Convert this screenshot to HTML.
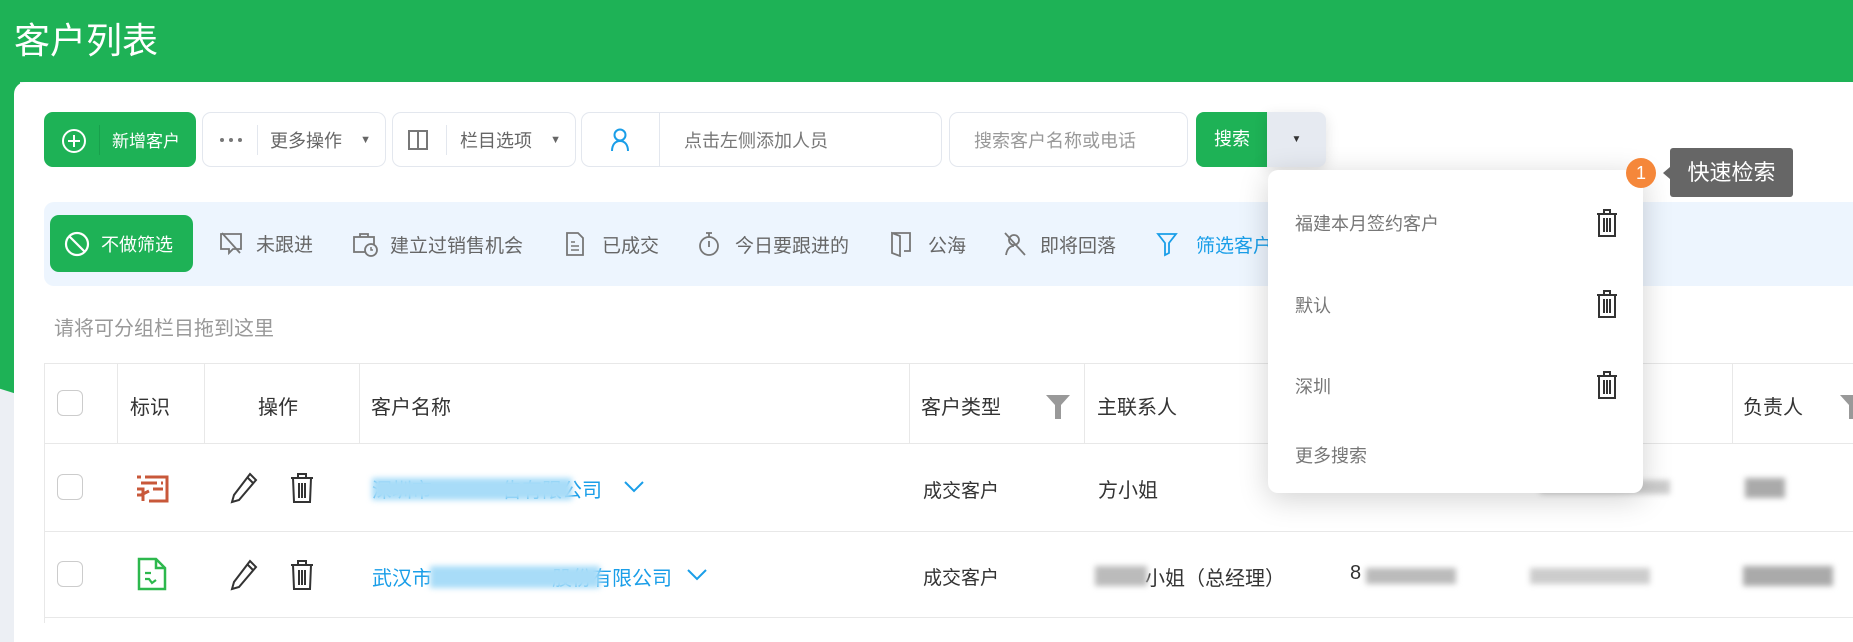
<!DOCTYPE html>
<html><head><meta charset="utf-8">
<style>
*{box-sizing:border-box;margin:0;padding:0}
body{width:1853px;height:622px;overflow:hidden;background:#eceff4;font-family:"Liberation Sans","Noto Sans CJK SC",sans-serif;position:relative;color:#333}
.abs{position:absolute}
.green{background:#1eb256}
.card{position:absolute;left:14px;top:82px;width:1860px;height:560px;background:#fff;border-radius:12px 0 0 0}
.btn{position:absolute;border:1px solid #e3e7ee;border-radius:9px;background:#fff;height:55px;top:112px;display:flex;align-items:center;font-size:18px;color:#666}
.fi{position:absolute;top:231px;font-size:19px;color:#666;display:flex;align-items:center}
.th,.td{position:absolute;font-size:20px;color:#333}
.vl{position:absolute;top:363px;height:80px;width:1px;background:#e8e8e8}
.hl{position:absolute;left:44px;height:1px;width:1809px;background:#e8e8e8}
.cb{position:absolute;left:57px;width:26px;height:26px;border:1px solid #ccc;border-radius:6px;background:#fff}
.blur{position:absolute;filter:blur(3px)}
</style></head><body>
<div class="abs green" style="left:0;top:0;width:1853px;height:82px"></div>
<div class="abs green" style="left:0;top:80px;width:20px;height:315px;clip-path:polygon(0 0,100% 0,100% 100%,0 98%)"></div>
<div class="abs" style="left:14px;top:20px;font-size:36px;color:#fff;line-height:42px">客户列表</div>
<div class="card"></div>

<!-- toolbar -->
<div class="btn" style="left:44px;width:152px;background:#1eb256;border-color:#1eb256;color:#fff">
 <svg style="position:absolute;left:16px;top:15px" width="26" height="26" viewBox="0 0 26 26"><circle cx="13" cy="13" r="11" fill="none" stroke="#fff" stroke-width="2"/><path d="M13 7v12M7 13h12" stroke="#fff" stroke-width="2"/></svg>
 <div style="position:absolute;left:54px;top:12px;width:1px;height:30px;background:#18a04c"></div>
 <span style="position:absolute;left:67px;font-size:17px">新增客户</span></div>
<div class="btn" style="left:202px;width:184px">
 <svg style="position:absolute;left:16px;top:24px" width="24" height="6" viewBox="0 0 24 6"><circle cx="3" cy="3" r="2" fill="#777"/><circle cx="12" cy="3" r="2" fill="#777"/><circle cx="21" cy="3" r="2" fill="#777"/></svg>
 <div style="position:absolute;left:54px;top:12px;width:1px;height:30px;background:#e3e7ee"></div>
 <span style="position:absolute;left:67px">更多操作</span>
 <span style="position:absolute;right:14px;font-size:11px;color:#666">▼</span></div>
<div class="btn" style="left:392px;width:184px">
 <svg style="position:absolute;left:15px;top:17px" width="20" height="20" viewBox="0 0 20 20"><rect x="1" y="1" width="18" height="18" fill="none" stroke="#777" stroke-width="2"/><path d="M10 1v18" stroke="#777" stroke-width="2"/></svg>
 <div style="position:absolute;left:53px;top:12px;width:1px;height:30px;background:#e3e7ee"></div>
 <span style="position:absolute;left:67px">栏目选项</span>
 <span style="position:absolute;right:14px;font-size:11px;color:#666">▼</span></div>
<div class="btn" style="left:581px;width:361px">
 <svg style="position:absolute;left:28px;top:15px" width="20" height="24" viewBox="0 0 20 24"><circle cx="10" cy="7" r="5.5" fill="none" stroke="#1a9ee8" stroke-width="2"/><path d="M2 23c0-6 3-10 8-10s8 4 8 10" fill="none" stroke="#1a9ee8" stroke-width="2"/></svg>
 <div style="position:absolute;left:77px;top:0;width:1px;height:53px;background:#e3e7ee"></div>
 <span style="position:absolute;left:102px;color:#777">点击左侧添加人员</span></div>
<div class="btn" style="left:949px;width:239px"><span style="position:absolute;left:24px;color:#999">搜索客户名称或电话</span></div>
<div class="abs" style="left:1196px;top:112px;width:72px;height:55px;background:#1eb256;border-radius:8px 0 0 8px;color:#fff;font-size:18px;line-height:55px;text-align:center">搜索</div>
<div class="abs" style="left:1267px;top:112px;width:59px;height:55px;background:#e6eaf1;border-radius:0 8px 8px 0;box-shadow:0 4px 14px rgba(0,0,0,.12);text-align:center;line-height:55px;font-size:10px;color:#333">▼</div>

<!-- filter bar -->
<div class="abs" style="left:44px;top:202px;width:1809px;height:84px;background:#edf5fe;border-radius:10px 0 0 10px"></div>
<div class="abs" style="left:50px;top:215px;width:143px;height:57px;background:#1eb256;border-radius:9px;color:#fff;font-size:18px;display:flex;align-items:center">
 <svg style="margin-left:14px" width="26" height="26" viewBox="0 0 26 26"><circle cx="13" cy="13" r="11" fill="none" stroke="#fff" stroke-width="2.2"/><path d="M5 5l16 16" stroke="#fff" stroke-width="2.2"/></svg>
 <span style="margin-left:11px">不做筛选</span></div>
<div class="fi" style="left:219px"><svg width="24" height="24" viewBox="0 0 24 24"><path d="M2 3h20v15h-8l-4 4v-4H2z" fill="none" stroke="#777" stroke-width="1.8"/><path d="M3 2l18 20" stroke="#777" stroke-width="1.8"/></svg><span style="position:absolute;left:37px;white-space:nowrap">未跟进</span></div>
<div class="fi" style="left:352px"><svg width="26" height="26" viewBox="0 0 26 26"><rect x="2" y="6" width="20" height="15" fill="none" stroke="#777" stroke-width="1.8"/><path d="M8 6V3h8v3" fill="none" stroke="#777" stroke-width="1.8"/><circle cx="19" cy="19" r="6" fill="#edf5fe" stroke="#777" stroke-width="1.8"/><path d="M19 16v3h2" stroke="#777" stroke-width="1.5" fill="none"/></svg><span style="position:absolute;left:38px;white-space:nowrap">建立过销售机会</span></div>
<div class="fi" style="left:565px"><svg width="20" height="26" viewBox="0 0 20 26"><path d="M2 2h11l5 5v17H2z" fill="none" stroke="#777" stroke-width="1.8"/><path d="M6 11h4M6 15h8M6 19h8" stroke="#777" stroke-width="1.5"/></svg><span style="position:absolute;left:37px;white-space:nowrap">已成交</span></div>
<div class="fi" style="left:697px"><svg width="24" height="26" viewBox="0 0 24 26"><circle cx="12" cy="15" r="9" fill="none" stroke="#777" stroke-width="1.8"/><path d="M9 2h6M12 2v4M12 10v6" stroke="#777" stroke-width="1.8"/></svg><span style="position:absolute;left:38px;white-space:nowrap">今日要跟进的</span></div>
<div class="fi" style="left:890px"><svg width="22" height="26" viewBox="0 0 22 26"><path d="M2 2h18v18h-6M2 2v20l8 3V5L2 2z" fill="none" stroke="#777" stroke-width="1.8"/></svg><span style="position:absolute;left:38px;white-space:nowrap">公海</span></div>
<div class="fi" style="left:1002px"><svg width="26" height="26" viewBox="0 0 26 26"><circle cx="12" cy="9" r="5" fill="none" stroke="#777" stroke-width="1.8"/><path d="M4 24c1-6 4-9 8-9M3 2l20 22" fill="none" stroke="#777" stroke-width="1.8"/></svg><span style="position:absolute;left:38px;white-space:nowrap">即将回落</span></div>
<div class="fi" style="left:1156px;color:#1a9ee8"><svg width="22" height="26" viewBox="0 0 22 26"><path d="M2 3h18l-7 9v10l-4 2V12z" fill="none" stroke="#1a9ee8" stroke-width="1.8"/></svg><span style="position:absolute;left:40px;white-space:nowrap">筛选客户</span></div>

<div class="abs" style="left:54px;top:312px;font-size:20px;color:#999">请将可分组栏目拖到这里</div>

<!-- table -->
<div class="hl" style="top:363px"></div>
<div class="hl" style="top:443px"></div>
<div class="hl" style="top:531px"></div>
<div class="hl" style="top:617px"></div>
<div class="abs" style="left:44px;top:363px;width:1px;height:260px;background:#e8e8e8"></div>
<div class="vl" style="left:117px"></div><div class="vl" style="left:204px"></div><div class="vl" style="left:359px"></div><div class="vl" style="left:909px"></div><div class="vl" style="left:1084px"></div><div class="vl" style="left:1347px"></div><div class="vl" style="left:1519px"></div><div class="vl" style="left:1732px"></div>
<div class="cb" style="top:390px"></div><div class="cb" style="top:474px"></div><div class="cb" style="top:561px"></div>
<div class="th" style="left:130px;top:391px">标识</div>
<div class="th" style="left:258px;top:391px">操作</div>
<div class="th" style="left:371px;top:391px">客户名称</div>
<div class="th" style="left:921px;top:391px">客户类型</div>
<svg class="abs" style="left:1044px;top:393px" width="28" height="28" viewBox="0 0 28 28"><path d="M2 2h24l-9 10v14h-6V12z" fill="#999"/></svg>
<div class="th" style="left:1097px;top:391px">主联系人</div>
<div class="th" style="left:1743px;top:391px">负责人</div>
<svg class="abs" style="left:1838px;top:393px" width="20" height="28" viewBox="0 0 20 28"><path d="M2 2h24l-9 10v14h-6V12z" fill="#999"/></svg>

<!-- row1 -->
<svg class="abs" style="left:135px;top:473px" width="36" height="30" viewBox="0 0 36 30"><path d="M2 4h4M10 4h22v24H14M6 10h16M26 10h2M18 16h10M2 16h6v12M2 22h4l8 -4" fill="none" stroke="#c8583a" stroke-width="3"/></svg>
<svg class="abs" style="left:230px;top:472px" width="28" height="32" viewBox="0 0 28 32"><path d="M20 2l6 6L9 28l-7 2 2-7z" fill="none" stroke="#333" stroke-width="2"/><path d="M17 5l6 6" stroke="#333" stroke-width="2"/></svg>
<svg class="abs" style="left:290px;top:472px" width="24" height="32" viewBox="0 0 24 32"><path d="M1 6h22M8 6V2h8v4M3 6l1 24h16l1-24M9 11v15M12 11v15M15 11v15" fill="none" stroke="#333" stroke-width="2"/></svg>
<div class="td" style="left:372px;top:474px;color:#1a9ee8">深圳市<span style="opacity:0">xxxxxxx</span>告有限公司</div>
<div class="blur" style="left:372px;top:478px;width:200px;height:22px;background:#a8dcf8"></div>
<svg class="abs" style="left:623px;top:480px" width="22" height="14" viewBox="0 0 22 14"><path d="M2 2l9 9 9-9" fill="none" stroke="#1a9ee8" stroke-width="2"/></svg>
<div class="td" style="left:923px;top:476px;font-size:19px">成交客户</div>
<div class="td" style="left:1098px;top:474px">方小姐</div>
<div class="blur" style="left:1540px;top:480px;width:130px;height:14px;background:#ccc"></div>
<div class="blur" style="left:1745px;top:478px;width:40px;height:20px;background:#aaa"></div>

<!-- row2 -->
<svg class="abs" style="left:137px;top:557px" width="30" height="34" viewBox="0 0 30 34"><path d="M2 2h17l9 9v21H2z M19 2v9h9" fill="none" stroke="#2db84d" stroke-width="2.5"/><path d="M8 16h6M8 22h4l3 4 4-3" fill="none" stroke="#2db84d" stroke-width="2.2"/></svg>
<svg class="abs" style="left:230px;top:559px" width="28" height="32" viewBox="0 0 28 32"><path d="M20 2l6 6L9 28l-7 2 2-7z" fill="none" stroke="#333" stroke-width="2"/><path d="M17 5l6 6" stroke="#333" stroke-width="2"/></svg>
<svg class="abs" style="left:290px;top:559px" width="24" height="32" viewBox="0 0 24 32"><path d="M1 6h22M8 6V2h8v4M3 6l1 24h16l1-24M9 11v15M12 11v15M15 11v15" fill="none" stroke="#333" stroke-width="2"/></svg>
<div class="td" style="left:372px;top:562px;color:#1a9ee8">武汉市<span style="opacity:0">xxxxxxxxxxxx</span>股份有限公司</div>
<div class="blur" style="left:430px;top:566px;width:170px;height:22px;background:#a8dcf8"></div>
<svg class="abs" style="left:686px;top:568px" width="22" height="14" viewBox="0 0 22 14"><path d="M2 2l9 9 9-9" fill="none" stroke="#1a9ee8" stroke-width="2"/></svg>
<div class="td" style="left:923px;top:563px;font-size:19px">成交客户</div>
<div class="td" style="left:1145px;top:562px">小姐（总经理）</div>
<div class="blur" style="left:1095px;top:566px;width:52px;height:20px;background:#bbb"></div>
<div class="td" style="left:1350px;top:562px">8</div>
<div class="blur" style="left:1366px;top:568px;width:90px;height:16px;background:#bbb"></div>
<div class="blur" style="left:1530px;top:568px;width:120px;height:16px;background:#ccc"></div>
<div class="blur" style="left:1743px;top:566px;width:90px;height:20px;background:#aaa"></div>

<!-- dropdown -->
<div class="abs" style="left:1268px;top:170px;width:375px;height:323px;background:#fff;border-radius:10px;box-shadow:0 6px 30px rgba(0,0,0,.18)"></div>
<div class="abs" style="left:1295px;top:210px;font-size:18px;color:#777">福建本月签约客户</div>
<div class="abs" style="left:1295px;top:292px;font-size:18px;color:#777">默认</div>
<div class="abs" style="left:1295px;top:373px;font-size:18px;color:#777">深圳</div>
<div class="abs" style="left:1295px;top:442px;font-size:18px;color:#777">更多搜索</div>
<svg class="abs" style="left:1596px;top:208px" width="22" height="30" viewBox="0 0 22 30"><path d="M3 6h16v22H3z M1 6h20M8 6V2h6v4M8 10v14M11 10v14M14 10v14" fill="none" stroke="#333" stroke-width="2"/></svg>
<svg class="abs" style="left:1596px;top:289px" width="22" height="30" viewBox="0 0 22 30"><path d="M3 6h16v22H3z M1 6h20M8 6V2h6v4M8 10v14M11 10v14M14 10v14" fill="none" stroke="#333" stroke-width="2"/></svg>
<svg class="abs" style="left:1596px;top:370px" width="22" height="30" viewBox="0 0 22 30"><path d="M3 6h16v22H3z M1 6h20M8 6V2h6v4M8 10v14M11 10v14M14 10v14" fill="none" stroke="#333" stroke-width="2"/></svg>

<!-- tooltip -->
<div class="abs" style="left:1626px;top:158px;width:30px;height:30px;border-radius:50%;background:#f5873a;color:#fff;font-size:18px;text-align:center;line-height:30px">1</div>
<div class="abs" style="left:1663px;top:167px;width:0;height:0;border-top:6px solid transparent;border-bottom:6px solid transparent;border-right:7px solid #666"></div>
<div class="abs" style="left:1670px;top:148px;width:123px;height:49px;background:#666;border-radius:3px;color:#fff;font-size:22px;line-height:49px;text-align:center">快速检索</div>
</body></html>
